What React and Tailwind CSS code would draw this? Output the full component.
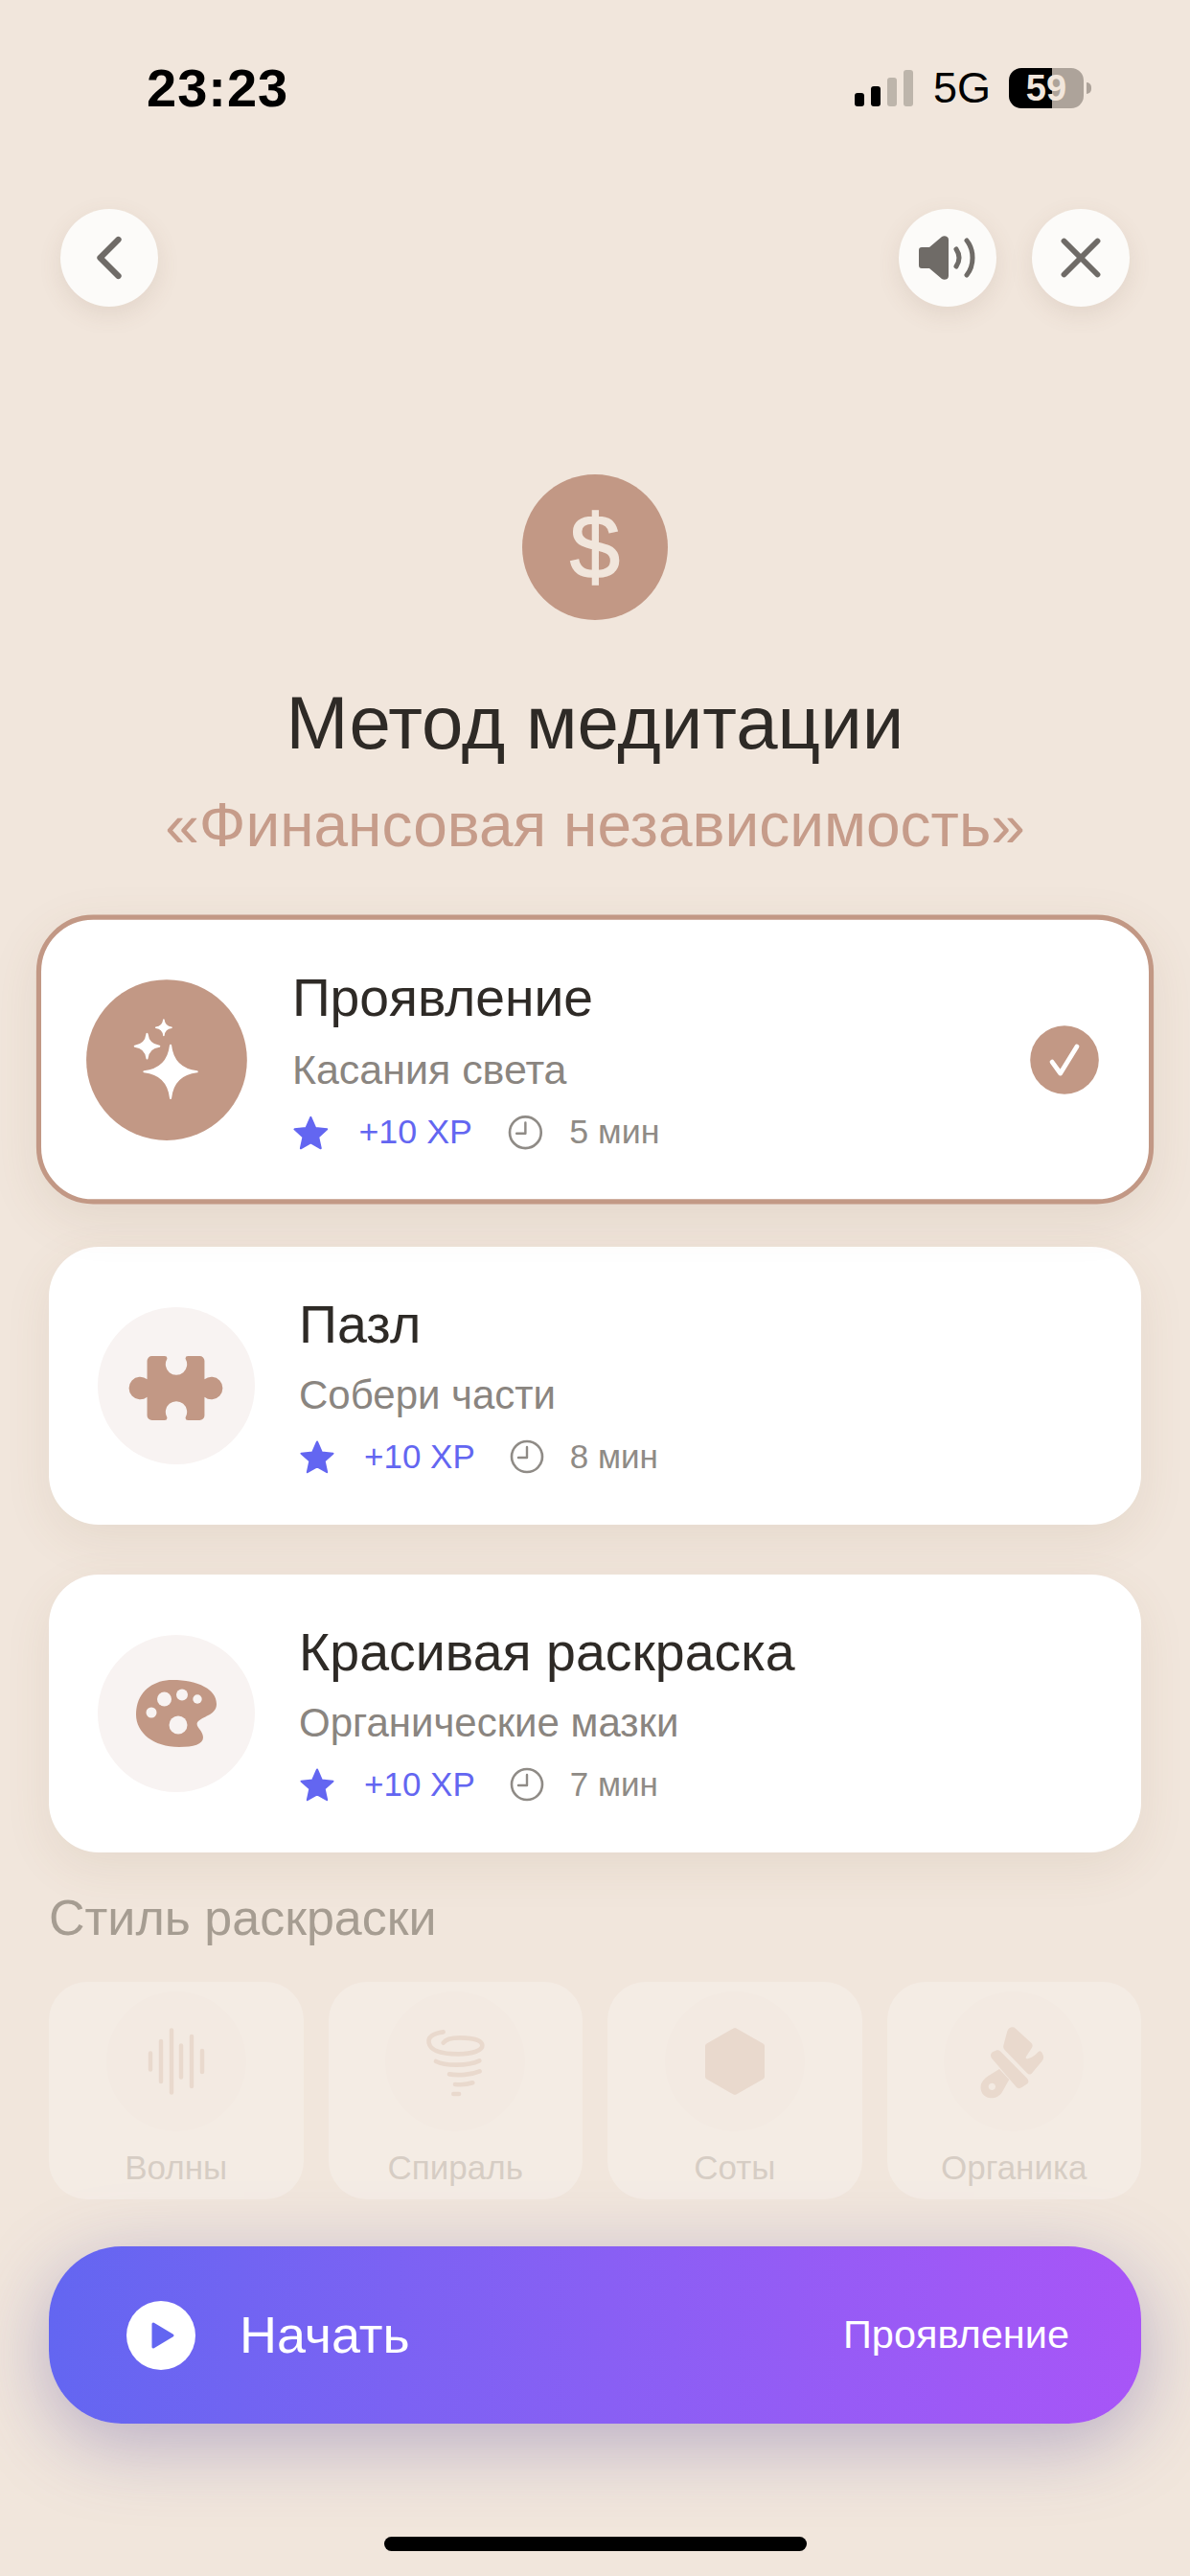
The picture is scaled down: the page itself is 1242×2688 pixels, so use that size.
import { ChevronLeft, X } from "lucide-react";

function Star({ className }) {
  return (
    <svg viewBox="0 0 38 36" className={className}>
      <path
        d="M19 2.500l4.800 11 11.700 1.200-8.800 7.900 2.500 11.600L19 28.300 8.800 34.200l2.500-11.600-8.800-7.900 11.700-1.200z"
        fill="#6366f1"
        stroke="#6366f1"
        strokeWidth="2"
        strokeLinejoin="round"
      />
    </svg>
  );
}

function Clock({ className }) {
  return (
    <svg viewBox="0 0 36 36" fill="none" stroke="#8f8b86" className={className}>
      <circle cx="18" cy="18" r="16" strokeWidth="2.600" />
      <path d="M18 8v11H9" strokeWidth="2.400" strokeLinecap="round" strokeLinejoin="round" />
    </svg>
  );
}

// four point star: centre x, centre y, radius
function sparkle(x, y, r) {
  const k = r * 0.1;
  return `M${x} ${y - r}Q${x + k} ${y - k} ${x + r} ${y}Q${x + k} ${y + k} ${x} ${y + r}Q${x - k} ${y + k} ${x - r} ${y}Q${x - k} ${y - k} ${x} ${y - r}Z`;
}

function Sparkles() {
  return (
    <svg viewBox="0 0 68 84" className="h-[84px] w-[68px]" fill="#fff" stroke="#fff" strokeWidth="2" strokeLinejoin="round">
      <path d={sparkle(38, 54, 27)} />
      <path d={sparkle(14, 28, 12.5)} />
      <path d={sparkle(31, 9, 8)} strokeWidth="1.500" />
    </svg>
  );
}

function Puzzle() {
  return (
    <svg viewBox="0 0 100 66" className="mt-[4px] h-[67px] w-[102px]" fill="#c29885">
      <path d="M25 0H38Q41 0 40.500 3A11 11 0 1 0 59.500 3Q59 0 62 0H74A5 5 0 0 1 79 5V24A11.500 11.500 0 1 1 79 42V61A5 5 0 0 1 74 66H62Q59 66 59.500 63A11 11 0 1 0 40.500 63Q41 66 38 66H25A5 5 0 0 1 20 61V42A11.500 11.500 0 1 1 20 24V5A5 5 0 0 1 25 0Z" />
    </svg>
  );
}

function Palette() {
  return (
    <svg viewBox="0 0 84 70" className="h-[70px] w-[84px]">
      <path
        d="M38 0C65 0 84 10 84 25C84 36 72 37 65 43C60 48 70 52 70 60C70 67 60 70 45 70C18 70 0 55 0 36C0 14 16 0 38 0Z"
        fill="#c29885"
      />
      <g fill="#f8f3f2">
        <circle cx="29.500" cy="20" r="7.500" />
        <circle cx="48" cy="15.500" r="6" />
        <circle cx="64" cy="20" r="4.700" />
        <circle cx="16" cy="34" r="5.500" />
        <circle cx="44" cy="47" r="9.500" />
      </g>
    </svg>
  );
}

function WavesIcon() {
  const bars = [
    [4, 17],
    [15, 42],
    [26, 65],
    [36, 33],
    [47, 52],
    [58, 22],
  ];
  return (
    <svg viewBox="0 0 62 70" className="h-[70px] w-[62px]" stroke="#d4b5a4" strokeWidth="4.500" strokeLinecap="round">
      {bars.map(([x, h]) => (
        <line key={x} x1={x} x2={x} y1={35 - h / 2} y2={35 + h / 2} />
      ))}
    </svg>
  );
}

function TornadoIcon() {
  return (
    <svg viewBox="0 0 300 300" className="h-[100px] w-[100px]" fill="none" stroke="#d4b5a4" strokeWidth="14" strokeLinecap="round">
      <path d="M113 58C80 62 64 75 68 92C72 115 105 127 160 127C205 127 236 115 235 100C234 84 205 76 165 76C140 76 120 82 113 92" />
      <path d="M90 150C120 165 190 165 226 148" />
      <path d="M132 190C160 195 200 192 227 181" />
      <path d="M150 222C170 224 190 222 205 217" />
      <path d="M145 252H162" />
    </svg>
  );
}

function HexIcon() {
  return (
    <svg viewBox="0 0 64 72" className="h-[72px] w-[64px]" fill="#d4b5a4" stroke="#d4b5a4" strokeWidth="6" strokeLinejoin="round">
      <path d="M32 4L60 20V52L32 68L4 52V20Z" />
    </svg>
  );
}

function BrushIcon() {
  return (
    <svg viewBox="0 0 300 300" className="h-[100px] w-[100px]" fill="#d4b5a4">
      <path d="M130 55C135 42 148 40 156 47L205 92C210 97 210 102 207 107L189 135C186 141 190 143 196 141C210 137 220 128 227 120C232 116 236 118 239 124C246 136 244 143 238 150L208 186C203 192 197 192 192 187L125 118C119 112 116 107 118 100Z" />
      <path d="M81 140C76 134 77 126 83 121L94 116C100 113 105 115 110 120L192 203C197 209 198 215 193 220L175 232C169 236 163 235 158 230Z" />
      <path
        fillRule="evenodd"
        d="M105 174L136 207C130 217 122 232 114 246C106 259 92 266 76 265C56 263 44 246 47 226C49 212 62 200 76 192ZM82 218a11 11 0 1 0 .1 0Z"
      />
    </svg>
  );
}

function RoundButton({ children }) {
  return (
    <button className="flex h-[102px] w-[102px] items-center justify-center rounded-full bg-[#fcfbf9] shadow-[0_8px_24px_rgba(120,90,70,0.12)]">
      {children}
    </button>
  );
}

const methods = [
  { title: "Проявление", sub: "Касания света", time: "5 мин", icon: <Sparkles />, selected: true },
  { title: "Пазл", sub: "Собери части", time: "8 мин", icon: <Puzzle /> },
  { title: "Красивая раскраска", sub: "Органические мазки", time: "7 мин", icon: <Palette /> },
];

const styles = [
  { label: "Волны", icon: <WavesIcon /> },
  { label: "Спираль", icon: <TornadoIcon /> },
  { label: "Соты", icon: <HexIcon /> },
  { label: "Органика", icon: <BrushIcon /> },
];

function MethodCard({ title, sub, time, icon, selected }) {
  return (
    <div
      className={
        selected
          ? "flex h-[295px] items-center rounded-[58px] border-[5px] border-[#c29885] bg-white pl-[46px] pr-[51px] shadow-[0_16px_50px_rgba(120,90,60,0.1)] scale-[1.023]"
          : "flex h-[290px] items-center rounded-[52px] bg-white pl-[51px] pr-[46px] shadow-[0_16px_50px_rgba(120,90,60,0.09)]"
      }
    >
      <div
        className={
          selected
            ? "flex h-[164px] w-[164px] shrink-0 items-center justify-center rounded-full bg-[#c29885]"
            : "flex h-[164px] w-[164px] shrink-0 items-center justify-center rounded-full bg-[#f8f3f2]"
        }
      >
        {icon}
      </div>
      <div className="ml-[46px] flex-1">
        <div className={selected ? "text-[54px] leading-[64px] text-[#2e2a26]" : "text-[55.5px] leading-[64px] text-[#2e2a26]"}>{title}</div>
        <div className="mt-[17px] text-[42px] leading-[50px] text-[#8a8580]">{sub}</div>
        <div className="mt-[17px] flex h-[44px] items-center">
          <Star className="h-[38px] w-[38px]" />
          <span className="ml-[30px] text-[35px] text-[#6366f1]">+10 XP</span>
          <Clock className="ml-[36px] h-[36px] w-[36px]" />
          <span className="ml-[27px] text-[35px] text-[#8f8b86]">{time}</span>
        </div>
      </div>
      {selected && (
        <div className="flex h-[70px] w-[70px] items-center justify-center rounded-full bg-[#c29885]">
          <svg viewBox="0 0 36 36" className="h-[38px] w-[38px]" fill="none" stroke="#fff" strokeWidth="4.500" strokeLinecap="round" strokeLinejoin="round">
            <path d="M6 20l8 11L30 5" />
          </svg>
        </div>
      )}
    </div>
  );
}

export default function App() {
  return (
    <div className="relative flex h-[2688px] w-[1242px] flex-col overflow-hidden bg-[#f1e6dc] font-['Liberation_Sans',Arial,sans-serif]">
      {/* Status bar */}
      <div className="flex h-[218px] items-start justify-between pl-[153px] pr-[103px] pt-[60px]">
        <span className="text-[56px] font-bold leading-[64px] tracking-[1px] text-black">23:23</span>
        <div className="mt-[11px] flex items-center">
          <div className="flex h-[38px] items-end gap-[7px]">
            <div className="h-[14px] w-[10px] rounded-[3px] bg-black" />
            <div className="h-[21px] w-[10px] rounded-[3px] bg-black" />
            <div className="h-[30px] w-[10px] rounded-[3px] bg-[#bdb5ab]" />
            <div className="h-[38px] w-[10px] rounded-[3px] bg-[#bdb5ab]" />
          </div>
          <span className="ml-[21px] text-[45px] leading-[42px] text-black">5G</span>
          <div className="relative ml-[19px] flex h-[42px] w-[78px] items-center justify-center overflow-hidden rounded-[13px] bg-[linear-gradient(90deg,#000_58%,#ada39a_58%)]">
            <span className="text-[38px] font-bold leading-none text-[#f1e6dc]">59</span>
          </div>
          <div className="ml-[3px] h-[12px] w-[5px] rounded-r-full bg-[#ada39a]" />
        </div>
      </div>

      {/* Top buttons */}
      <div className="flex items-center pl-[63px] pr-[63px]">
        <RoundButton>
          <ChevronLeft size={76} strokeWidth={2} className="text-[#6f6b67]" />
        </RoundButton>
        <div className="flex-1" />
        <RoundButton>
          <svg viewBox="0 0 60 46" className="h-[46px] w-[60px]" fill="#6f6b67">
            <path d="M0 15C0 13 1 12 3 12H11L24 1C26-.500 31 0 31 4V42C31 46 26 46.500 24 45L11 34H3C1 34 0 33 0 31Z" />
            <path d="M39 14C43 20 43 26 39 32" fill="none" stroke="#6f6b67" strokeWidth="5" strokeLinecap="round" />
            <path d="M50 5C58 15 58 31 50 41" fill="none" stroke="#6f6b67" strokeWidth="5" strokeLinecap="round" />
          </svg>
        </RoundButton>
        <div className="w-[37px]" />
        <RoundButton>
          <X size={70} strokeWidth={2} className="text-[#6f6b67]" />
        </RoundButton>
      </div>

      {/* Heading */}
      <div className="mt-[175px] flex flex-col items-center">
        <div className="flex h-[152px] w-[152px] items-center justify-center rounded-full bg-[#c29885]">
          <span className="text-[94px] leading-none text-[#f1e6dc] [-webkit-text-stroke:1.5px_#f1e6dc]">$</span>
        </div>
        <h1 className="mt-[63px] text-[78px] font-normal leading-[88px] text-[#2e2a26]">Метод медитации</h1>
        <p className="mt-[27px] text-[64px] leading-[72px] text-[#c69c8a]">«Финансовая независимость»</p>
      </div>

      {/* Methods */}
      <div className="mt-[61px] flex flex-col px-[51px]">
        {methods.map((m, i) => (
          <div key={m.title} className={i === 0 ? "" : i === 1 ? "mt-[48px]" : "mt-[52px]"}>
            <MethodCard {...m} />
          </div>
        ))}
      </div>

      {/* Coloring style */}
      <div className="mt-[39px] px-[51px]">
        <div className="text-[52px] leading-[58px] text-[#a69d92]">Стиль раскраски</div>
        <div className="mt-[38px] grid grid-cols-4 gap-[26px] opacity-25">
          {styles.map((s) => (
            <div key={s.label} className="flex h-[227px] flex-col items-center rounded-[40px] bg-white pt-[10px]">
              <div className="flex h-[146px] w-[146px] items-center justify-center rounded-full bg-[#fbf8f6]">
                {s.icon}
              </div>
              <span className="mt-[17px] text-[35px] leading-[42px] text-[#8a8580]">{s.label}</span>
            </div>
          ))}
        </div>
      </div>

      {/* Start button */}
      <div className="mt-[49px] px-[51px]">
        <button className="flex h-[185px] w-full items-center rounded-[76px] bg-gradient-to-r from-[#6366f1] to-[#a855f7] pl-[81px] pr-[75px] shadow-[0_20px_80px_rgba(90,80,160,0.38)]">
          <div className="flex h-[72px] w-[72px] items-center justify-center rounded-full bg-white">
            <svg viewBox="0 0 26 30" className="ml-[3px] h-[30px] w-[26px]" fill="#6366f1" stroke="#6366f1" strokeWidth="3" strokeLinejoin="round">
              <path d="M3 3L23 15L3 27Z" />
            </svg>
          </div>
          <span className="ml-[46px] text-[54px] text-white">Начать</span>
          <span className="ml-auto text-[41.5px] text-white">Проявление</span>
        </button>
      </div>

      {/* Home indicator */}
      <div className="absolute bottom-[26px] left-[401px] h-[15px] w-[441px] rounded-full bg-black" />
    </div>
  );
}
